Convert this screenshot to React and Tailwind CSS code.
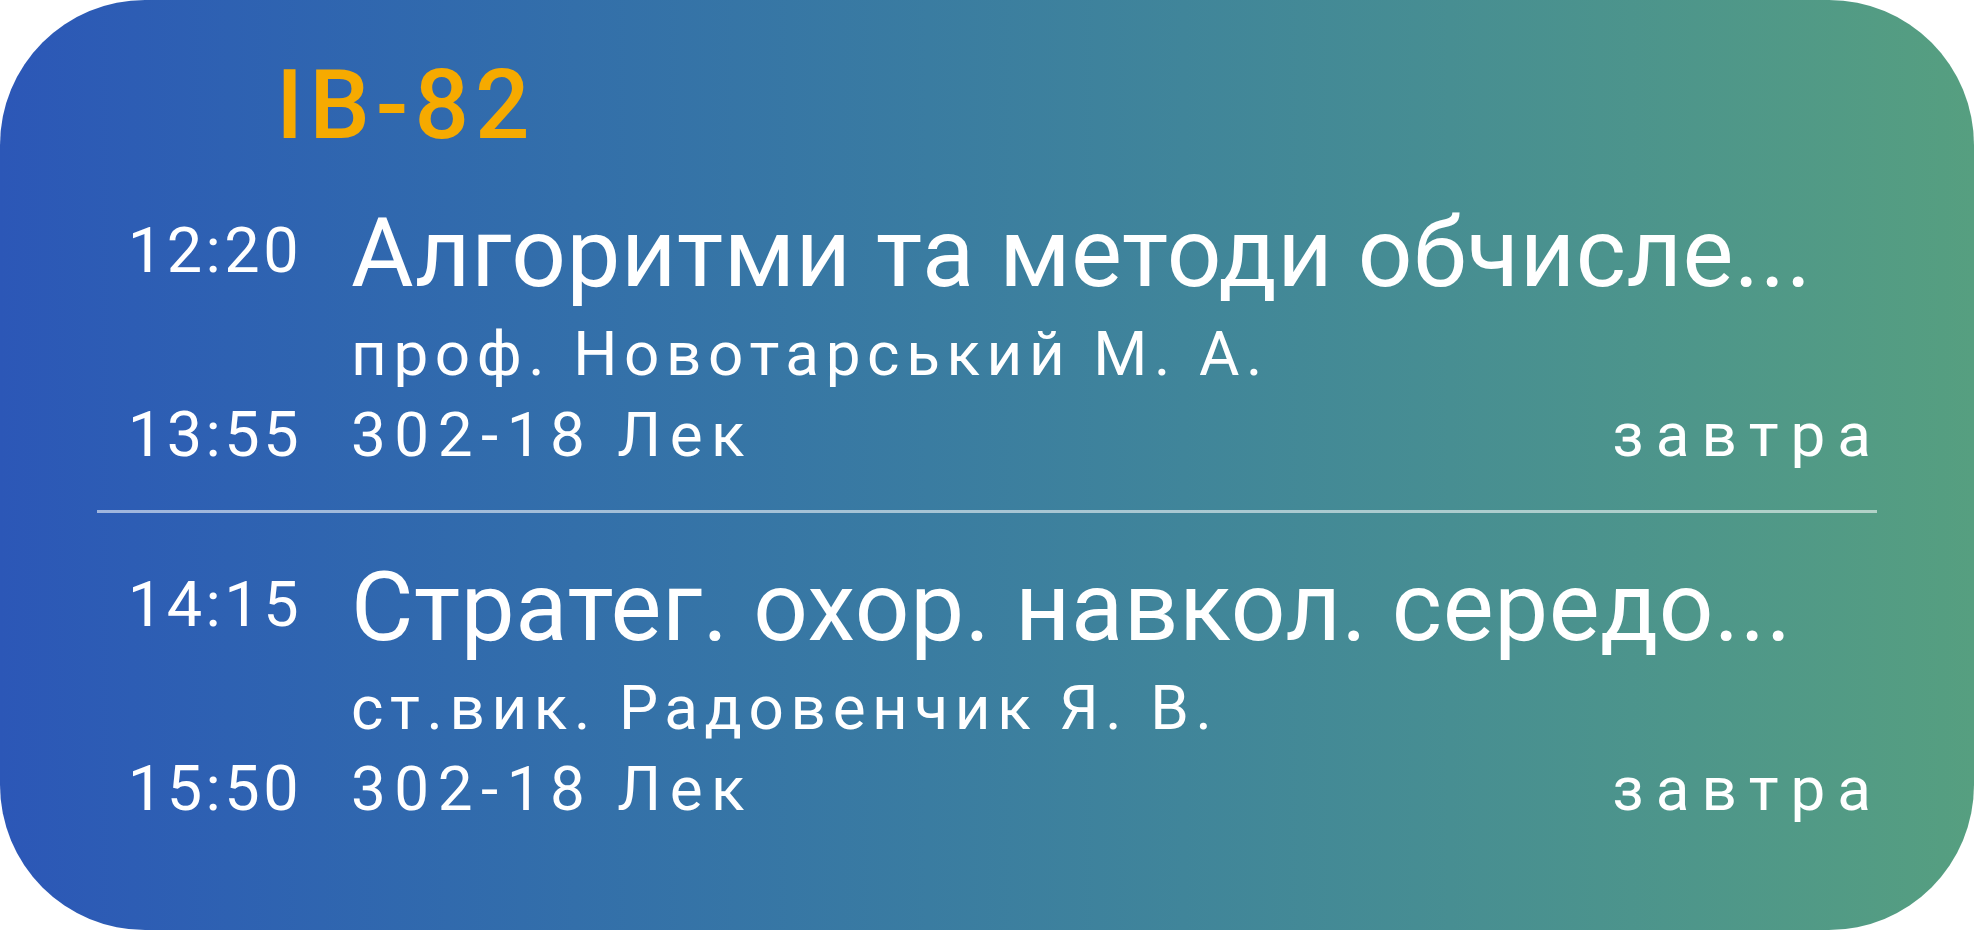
import React from "react"

const lessons = [
  {
    start: "12:20",
    end: "13:55",
    title: "Алгоритми та методи обчисле...",
    teacher: "проф. Новотарський М. А.",
    room: "302-18 Лек",
    day: "завтра",
  },
  {
    start: "14:15",
    end: "15:50",
    title: "Стратег. охор. навкол. середо...",
    teacher: "ст.вик. Радовенчик Я. В.",
    room: "302-18 Лек",
    day: "завтра",
  },
]

const Lesson = ({ lesson }) => (
  <div className="flex text-white">
    {/* time column */}
    <div className="w-[236px] shrink-0 flex flex-col justify-between items-center pt-[14px] text-[63px] leading-none tracking-[3.5px]">
      <span>{lesson.start}</span>
      <span>{lesson.end}</span>
    </div>

    <div className="flex-1 min-w-0 ml-[18px] flex flex-col">
      <div className="text-[96px] leading-none tracking-[0.6px] whitespace-nowrap">{lesson.title}</div>
      <div className="mt-[22px] text-[62px] leading-none tracking-[6.6px] whitespace-nowrap">{lesson.teacher}</div>
      <div className="mt-[19px] flex justify-between text-[62px] leading-none">
        <span className="tracking-[8.5px]">{lesson.room}</span>
        <span className="-mr-[6px] tracking-[12px]">{lesson.day}</span>
      </div>
    </div>
  </div>
)

export default function App() {
  return (
    <div className="w-[1974px] h-[930px] bg-white font-['Roboto',sans-serif]">
      <div className="h-full flex flex-col pt-[57px] px-[97px] pb-[110px] rounded-[145px] bg-linear-to-r from-[#2c57b7] to-[#569f80] overflow-hidden">
        <div className="pl-[179px] text-[96px] leading-none font-medium tracking-[6px] text-[#f6aa00]">IB-82</div>

        <div className="mt-[52px]">
          <Lesson lesson={lessons[0]} />
        </div>

        <div className="mt-[44px] h-[3px] bg-white/55" />

        <div className="mt-[46px]">
          <Lesson lesson={lessons[1]} />
        </div>
      </div>
    </div>
  )
}
